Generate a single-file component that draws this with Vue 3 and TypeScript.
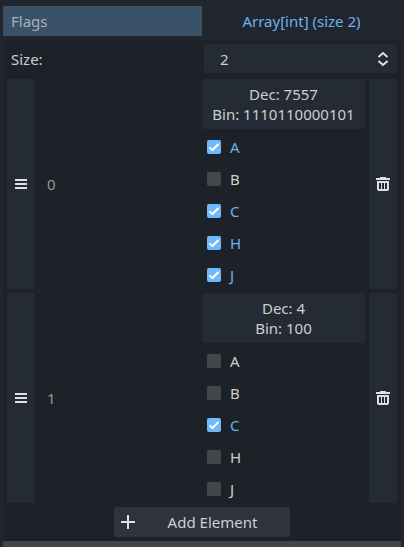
<script setup lang="ts">
import { computed, ref } from 'vue'

interface Flag {
  name: string
  bit: number
}

const flags: Flag[] = [
  { name: 'A', bit: 1 },
  { name: 'B', bit: 2 },
  { name: 'C', bit: 4 },
  { name: 'H', bit: 128 },
  { name: 'J', bit: 256 },
]

const items = ref<number[]>([7557, 4])
const open = ref(true)
const size = computed(() => items.value.length)

function toggle(index: number, bit: number) {
  items.value[index] ^= bit
}

function resize(next: number) {
  const length = Math.max(0, Math.floor(next) || 0)
  items.value = Array.from({ length }, (_, i) => items.value[i] ?? 0)
}

function onSize(event: Event) {
  resize(Number((event.target as HTMLInputElement).value))
}

function remove(index: number) {
  items.value.splice(index, 1)
}
</script>

<template>
  <main class="inspector">
    <div class="property">
      <span class="property-name">Flags</span>
      <button class="property-value" type="button" @click="open = !open">Array[int] (size {{ size }})</button>
    </div>

    <section v-if="open" class="panel">
      <div class="size-row">
        <label for="size">Size:</label>
        <div class="spin">
          <input id="size" type="text" inputmode="numeric" :value="size" @change="onSize" />
          <svg class="spin-icon" width="12" height="16" viewBox="0 0 12 16" aria-hidden="true">
            <path d="M1.500 6 6 2l4.500 4M1.500 10 6 14l4.500-4" />
          </svg>
        </div>
      </div>

      <ul class="elements">
        <li v-for="(value, i) in items" :key="i" class="element">
          <button class="side" type="button" aria-label="Move element">
            <svg width="12" height="12" viewBox="0 0 12 12" aria-hidden="true">
              <path class="fill" d="M0 1h12v2H0zM0 5h12v2H0zM0 9h12v2H0z" />
            </svg>
          </button>
          <div class="body">
            <span class="index">{{ i }}</span>
            <div class="editor">
              <button class="summary" type="button">
                <span>Dec: {{ value }}</span>
                <span>Bin: {{ value.toString(2) }}</span>
              </button>
              <label
                v-for="flag in flags"
                :key="flag.name"
                class="flag"
                :class="{ on: (value & flag.bit) !== 0 }"
              >
                <input type="checkbox" :checked="(value & flag.bit) !== 0" @change="toggle(i, flag.bit)" />
                <svg class="tick" width="14" height="14" viewBox="0 0 14 14" aria-hidden="true">
                  <path d="M2.500 7.500 5.500 10 11.500 4" />
                </svg>
                <span>{{ flag.name }}</span>
              </label>
            </div>
          </div>
          <button class="side" type="button" aria-label="Remove element" @click="remove(i)">
            <svg width="14" height="14" viewBox="0 0 14 14" aria-hidden="true">
              <path
                class="fill"
                fill-rule="evenodd"
                d="M4 0h6v1h4v2H0V1h4zM1 4h12v8q0 2-2 2H3q-2 0-2-2zM3 6v6h2V6zM6 6v6h2V6zM9 6v6h2V6z"
              />
            </svg>
          </button>
        </li>
      </ul>

      <button class="add" type="button" @click="resize(size + 1)">
        <svg width="14" height="14" viewBox="0 0 14 14" aria-hidden="true">
          <path class="fill" d="M6 0h2v6h6v2H8v6H6V8H0V6h6z" />
        </svg>
        <span>Add Element</span>
      </button>
    </section>

    <div class="category"></div>
  </main>
</template>

<style>
body {
  background: #21262e;
}
</style>

<style scoped>
.inspector {
  box-sizing: border-box;
  padding: 6px 3px 0;
  color: #cdcfd2;
  font-family: "Noto Sans", sans-serif;
  font-size: 15px;
  line-height: 20px;
}

button,
input {
  box-sizing: border-box;
  margin: 0;
  padding: 0;
  border: 0;
  color: inherit;
  font: inherit;
}

.fill {
  fill: #e0e0e0;
}

.property {
  display: grid;
  grid-template-columns: 1fr 1fr;
  height: 30px;
}

.property-name {
  padding: 5px 8px;
  border-radius: 2px 0 0 2px;
  background: #3a5168;
  color: #a5b3bf;
}

.property-value {
  background: transparent;
  color: #6cb2ee;
}

.panel {
  display: flex;
  flex-direction: column;
  margin-top: 4px;
  padding: 4px;
  border-radius: 2px;
  background: #1d2229;
}

.size-row {
  display: grid;
  grid-template-columns: 1fr 1fr;
  align-items: center;
  gap: 4px;
  margin-bottom: 6px;
}

.size-row label {
  padding-left: 4px;
}

.spin {
  display: flex;
  align-items: center;
  min-width: 0;
  padding: 0 8px 0 16px;
  border-radius: 2px;
  background: #252b34;
}

.spin input {
  flex: 1;
  min-width: 0;
  height: 29px;
  background: transparent;
  outline: 0;
}

.spin-icon,
.tick {
  flex: none;
  fill: none;
  stroke: #e0e0e0;
  stroke-width: 2;
}

.elements {
  display: flex;
  flex-direction: column;
  gap: 4px;
  margin: 0;
  padding: 0;
  list-style: none;
}

.element {
  display: grid;
  grid-template-columns: 28px 1fr 28px;
  gap: 4px;
}

.side {
  display: flex;
  align-items: center;
  justify-content: center;
  border-radius: 2px;
  background: #252b34;
}

.body {
  display: grid;
  grid-template-columns: 1fr 1fr;
  align-items: center;
}

.index {
  padding-left: 8px;
  color: #96999d;
}

.editor {
  display: flex;
  flex-direction: column;
  gap: 4px;
}

.summary {
  display: flex;
  flex-direction: column;
  align-items: center;
  justify-content: center;
  height: 50px;
  border-radius: 2px;
  background: #252b34;
  white-space: nowrap;
}

.flag {
  display: grid;
  grid-template-columns: 14px 1fr;
  align-items: center;
  column-gap: 9px;
  height: 28px;
  padding-left: 5px;
}

.flag input {
  grid-area: 1 / 1;
  width: 14px;
  height: 14px;
  border-radius: 2px;
  background: #43474b;
  appearance: none;
}

.flag input:checked {
  background: #70bafa;
}

.tick {
  grid-area: 1 / 1;
  visibility: hidden;
  stroke: #ffffff;
  pointer-events: none;
}

.flag.on {
  color: #6cb2ee;
}

.flag.on .tick {
  visibility: visible;
}

.add {
  display: flex;
  align-items: center;
  align-self: center;
  gap: 33px;
  height: 30px;
  margin-top: 4px;
  padding: 0 33px 0 7px;
  border-radius: 2px;
  background: #2e333c;
}

.category {
  height: 6px;
  border-radius: 2px 2px 0 0;
  background: #40444c;
}
</style>
